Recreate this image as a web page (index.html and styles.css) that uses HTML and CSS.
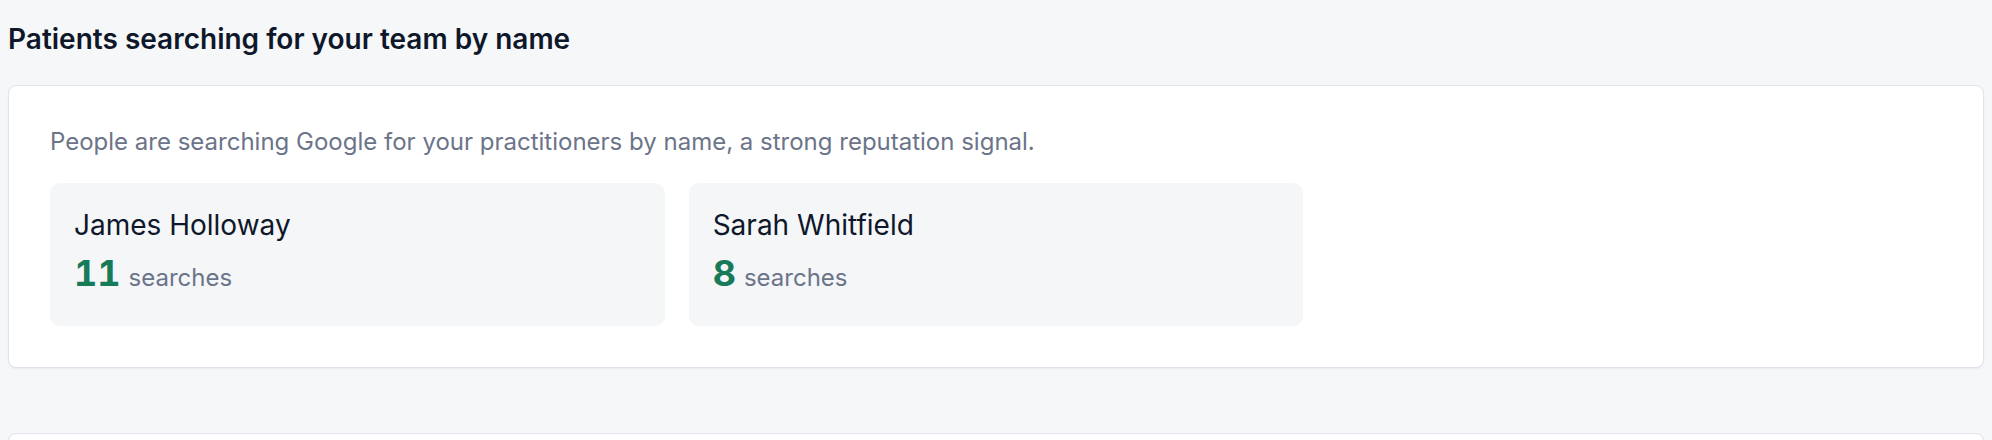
FILE: index.html
```html
<!doctype html>
<html lang="en">
<head>
  <meta charset="UTF-8">
  <title>Team searches</title>
  <link rel="stylesheet" href="styles.css">
</head>
<body>
  <div class="section">
    <h2 class="section-title">Patients searching for your team by name</h2>
    <div class="panel">
      <p class="panel-note">People are searching Google for your practitioners by name, a strong reputation signal.</p>
      <ul class="people">
        <li class="person">
          <div class="person-name">James Holloway</div>
          <div class="person-count"><b>11</b><span>searches</span></div>
        </li>
        <li class="person">
          <div class="person-name">Sarah Whitfield</div>
          <div class="person-count"><b>8</b><span>searches</span></div>
        </li>
      </ul>
    </div>
  </div>
  <div class="section">
    <div class="panel panel-next"></div>
  </div>
</body>
</html>
```

FILE: styles.css
```css
*{margin:0;
  padding:0;
  box-sizing:border-box;
  list-style:none;}
body{background:#f6f7f9;
     font-family:Inter, "Noto Sans", sans-serif;
     color:#0f172a;
     padding:0 8px;}
.section-title{font-size:28px;
               line-height:36px;
               font-weight:600;
               color:#0f172a;
               padding-top:21px;
               margin-bottom:28px;}
.panel{background:#fff;
       border:1px solid #e0e2ec;
       border-radius:8px;
       box-shadow:0 1px 2px rgba(30,40,90,.06);
       padding:40px 41px 41px;}
.panel-note{font-size:24px;
            line-height:32px;
            color:#6b7489;
            margin-bottom:25px;}
.people{display:grid;
        grid-template-columns:repeat(3, 1fr);
        gap:24px;}
.person{background:#f4f6f8;
        border-radius:10px;
        padding:24px 24px 33px;}
.person-name{font-size:28px;
             line-height:36px;
             color:#0f172a;}
.person-count{display:flex;
              align-items:baseline;
              margin-top:10px;
              height:40px;}
.person-count b{font-size:36px;
                line-height:40px;
                font-weight:700;
                font-variant-numeric:tabular-nums;
                color:#177a59;}
.person-count span{font-size:24px;
                   line-height:1;
                   color:#6b7489;
                   margin-left:8px;}
.section + .section{margin-top:65px;}
.panel-next{height:200px;}
```
